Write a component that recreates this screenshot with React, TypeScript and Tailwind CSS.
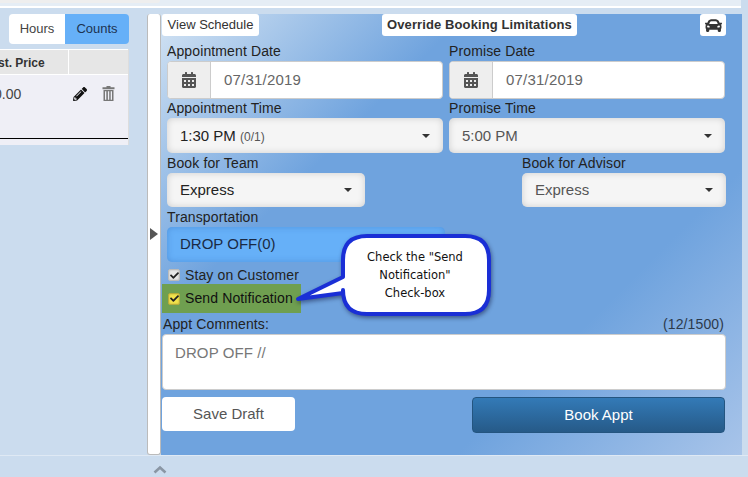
import { FaCalendarAlt, FaCar, FaCheck, FaPencilAlt } from "react-icons/fa";

function Label({ children, h = "h-[20px]" }: { children: React.ReactNode; h?: string }) {
  return <div className={`${h} flex items-center text-[14px] tracking-[0.12px] text-[#222]`}>{children}</div>;
}

function DateInput({ value }: { value: string }) {
  return (
    <div className="flex h-[38px] overflow-hidden rounded-[4px] border border-[#ccc] bg-white">
      <div className="flex w-[43px] items-center justify-center border-r border-[#ccc] bg-[#eee] text-[#555]">
        <FaCalendarAlt className="mr-[1px] h-[16px] w-[14px]" />
      </div>
      <div className="flex items-center pl-[13px] text-[15px] tracking-[0.2px] text-[#666]">{value}</div>
    </div>
  );
}

function Select({ children, className, dark }: { children: React.ReactNode; className: string; dark?: boolean }) {
  return (
    <div
      className={`flex items-center justify-between rounded-[5px] bg-[#f5f5f5] pl-[13px] pr-[13px] text-[15px] shadow-[inset_0_0_7px_rgba(0,0,0,0.16)] ${dark ? "text-[#222]" : "text-[#555]"} ${className}`}
    >
      <span className="pt-[1px]">{children}</span>
      <span className="h-0 w-0 border-x-[4px] border-t-[4px] border-x-transparent border-t-[#333]" />
    </div>
  );
}

function Check({ yellow }: { yellow?: boolean }) {
  return (
    <span
      className={`flex h-[12px] w-[12px] items-center justify-center rounded-[2px] border shadow-[inset_0_0_2px_rgba(0,0,0,0.25)] ${yellow ? "border-[#b8ac3a] bg-[#f2e34c]" : "border-[#bbb] bg-[#e8e8e8]"}`}
    >
      <FaCheck className="h-[9px] w-[9px] text-[#222]" />
    </span>
  );
}

function Callout() {
  return (
    <div className="absolute left-[294px] top-[232px] h-[88px] w-[200px]">
      <svg width="200" height="88" viewBox="0 0 200 88" className="absolute inset-0 drop-shadow-[1px_2px_2px_rgba(0,0,40,0.45)]">
        <path
          d="M73 4 H171 Q195 4 195 28 V58 Q195 82 171 82 H73 Q49 82 49 58 V61 L4 67 L49 45 V28 Q49 4 73 4 Z"
          fill="#fff"
          stroke="#1a2fd6"
          strokeWidth="4"
          strokeLinejoin="round"
        />
      </svg>
      <div className="absolute left-[48px] top-[16px] w-[146px] text-center font-['DejaVu_Sans',sans-serif] text-[11.5px] leading-[18px] text-[#111]">
        Check the "Send
        <br />
        Notification"
        <br />
        Check-box
      </div>
    </div>
  );
}

export default function App() {
  return (
    <div className="relative flex h-[477px] w-[748px] flex-col overflow-hidden bg-[#cbdcee] font-['Liberation_Sans',Arial,sans-serif]">
      <div className="mr-[7px] h-[8px] border-b-2 border-white bg-[#e5edf5]">
        <div className="h-[3px] w-[160px] rounded-br-[3px] bg-[#eeeeee]" />
      </div>

      <div className="mt-[6px] flex h-[441px]">
        <div className="w-[147px] shrink-0">
          <div className="ml-[9px] flex h-[30px] w-[120px] overflow-hidden rounded-[4px] text-[13px] text-[#444]">
            <div className="flex w-[56px] items-center justify-center bg-white">Hours</div>
            <div className="flex w-[64px] items-center justify-center bg-[#66b0f8] text-[#1d3350]">Counts</div>
          </div>
          <div className="mt-[5px] h-[96px] w-[129px] overflow-hidden border-r border-[#ddd] bg-[#efeff6]">
            <div className="flex h-[26px] border-y border-white bg-[#e6e6e6]">
              <div className="flex w-[69px] items-center overflow-hidden whitespace-nowrap border-r border-white pt-[1px] text-[12px] font-bold text-[#333]">
                <span className="ml-[-10px]">Est. Price</span>
              </div>
              <div className="flex-1" />
            </div>
            <div className="flex h-[64px] border-b border-black">
              <div className="w-[69px] overflow-hidden whitespace-nowrap pt-[10px] text-[14px] leading-[18px] text-[#444]">
                <span className="ml-[-6px]">0.00</span>
              </div>
              <FaPencilAlt className="ml-[4px] mt-[12px] h-[14px] w-[14px] text-[#111]" />
              <svg width="13" height="15" viewBox="0 0 13 15" className="ml-[15px] mt-[11px] text-[#777]" fill="currentColor">
                <path d="M4.5 0h4v1.2H12.5v2H.5v-2h4zM1.5 4h10v11h-10zM3 5.3v8.4h1.3V5.3zM5.9 5.3v8.4h1.3V5.3zM8.7 5.3v8.4H10V5.3z" fillRule="evenodd" />
              </svg>
            </div>
          </div>
        </div>

        <div className="flex w-[14px] shrink-0 items-center rounded-[3px] border-x border-b border-[#bbb] bg-white">
          <span className="ml-[2px] h-0 w-0 border-y-[6px] border-l-[8px] border-y-transparent border-l-[#555]" />
        </div>

        <div className="w-[581px] bg-[linear-gradient(135deg,#d3e3f3_0%,#6fa3de_30%,#6fa3de_72%,#a8c4e9_100%)]">
          <div className="flex h-[22px] items-center text-[13px] text-[#333]">
            <div className="ml-[1px] flex h-[22px] w-[97px] items-center justify-center rounded-[3px] bg-white">View Schedule</div>
            <div className="ml-[123px] flex h-[22px] w-[195px] items-center justify-center rounded-[3px] bg-white font-bold tracking-[0.1px]">
              Override Booking Limitations
            </div>
            <div className="ml-[123px] flex h-[22px] w-[26px] items-center justify-center rounded-[3px] bg-white">
              <FaCar className="h-[17px] w-[17px] text-[#333]" />
            </div>
          </div>

          <div className="mt-[5px] ml-[6px] grid w-[558px] grid-cols-[276px_276px] gap-x-[6px]">
            <div>
              <Label>Appointment Date</Label>
              <DateInput value="07/31/2019" />
              <Label h="h-[19px]">Appointment Time</Label>
              <Select className="h-[35px]" dark>
                1:30 PM <span className="text-[12px] text-[#555]">(0/1)</span>
              </Select>
            </div>
            <div>
              <Label>Promise Date</Label>
              <DateInput value="07/31/2019" />
              <Label h="h-[19px]">Promise Time</Label>
              <Select className="h-[35px]">5:00 PM</Select>
            </div>
          </div>

          <div className="ml-[6px] flex w-[559px] justify-between">
            <div className="w-[198px]">
              <Label>Book for Team</Label>
              <Select className="h-[34px]" dark>Express</Select>
            </div>
            <div className="w-[204px]">
              <Label>Book for Advisor</Label>
              <Select className="h-[34px]">Express</Select>
            </div>
          </div>

          <div className="ml-[6px]">
            <Label>Transportation</Label>
            <div className="flex h-[35px] w-[278px] items-center rounded-[5px] bg-[#66b0f8] pl-[13px] text-[15px] text-[#1a2a44] shadow-[inset_0_0_6px_rgba(30,80,160,0.3)]">
              DROP OFF(0)
            </div>
          </div>

          <div className="ml-[7px] mt-[4px] flex h-[18px] items-center gap-[5px] text-[14px] tracking-[0.12px] text-[#222]">
            <Check />
            <span>Stay on Customer</span>
          </div>
          <div className="ml-[1px] flex h-[29px] w-[139px] items-center gap-[5px] bg-[#6f9f50] pl-[6px] text-[14px] tracking-[0.12px] text-[#111]">
            <Check yellow />
            <span>Send Notification</span>
          </div>

          <div className="ml-[2px] flex h-[21px] w-[561px] items-end justify-between pb-[1px] text-[14px] tracking-[0.12px] text-[#222]">
            <span className="leading-[18px]">Appt Comments:</span>
            <span className="leading-[18px] text-[#2c3a4c]">(12/1500)</span>
          </div>
          <div className="ml-[1px] h-[56px] w-[564px] rounded-[4px] border border-[#ccc] bg-white pl-[12px] pt-[7px] text-[15px] tracking-[0.1px] text-[#777]">
            DROP OFF //
          </div>

          <div className="ml-[1px] mt-[7px] flex w-[563px] items-start justify-between">
            <div className="flex h-[34px] w-[133px] items-center justify-center rounded-[4px] bg-white text-[15px] text-[#555]">
              Save Draft
            </div>
            <div className="flex h-[36px] w-[253px] items-center justify-center rounded-[4px] border border-[#245580] bg-[linear-gradient(180deg,#337ab7,#265a88)] text-[15px] text-white">
              Book Appt
            </div>
          </div>
        </div>
      </div>

      <div className="flex flex-1 border-t border-[#dfe9f4]">
        <svg width="14" height="9" viewBox="0 0 14 9" className="ml-[153px] mt-[9px]">
          <path d="M1.5 7.5 L7 2.5 L12.5 7.5" fill="none" stroke="#8a96a4" strokeWidth="2.6" />
        </svg>
      </div>

      <Callout />
    </div>
  );
}
